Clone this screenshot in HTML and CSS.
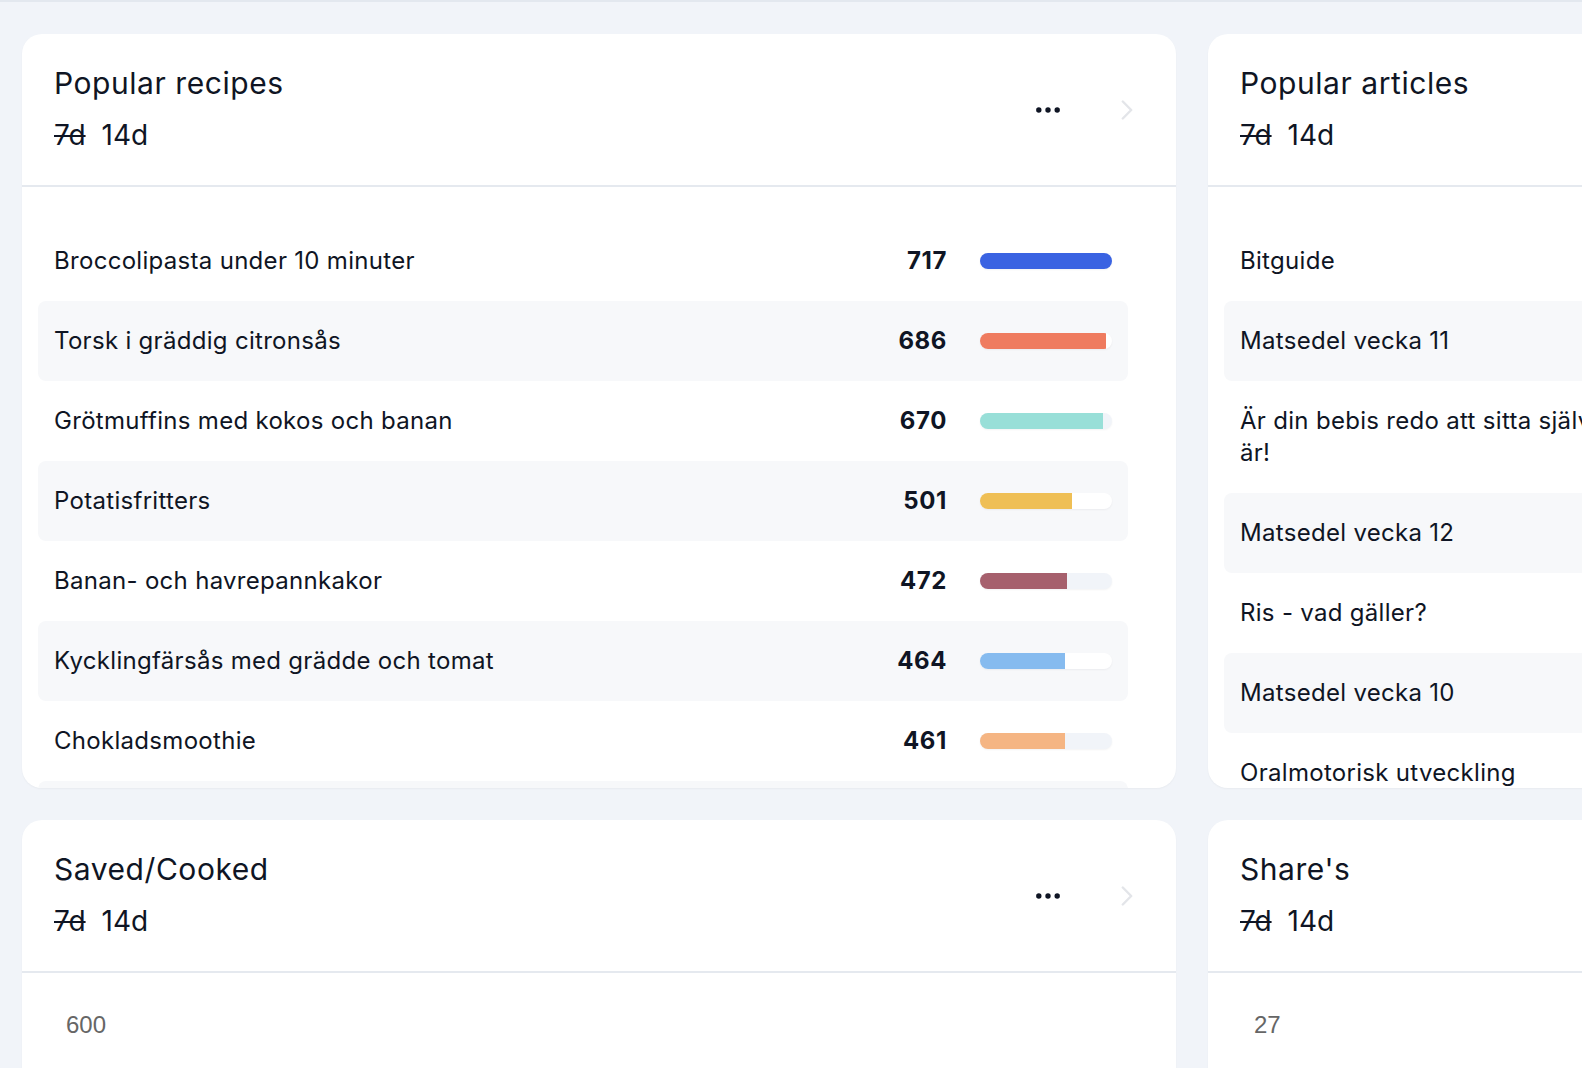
FILE: index.html
```html
<!DOCTYPE html>
<html lang="sv">
<head>
<meta charset="utf-8">
<title>Dashboard</title>
<link rel="stylesheet" href="styles.css">
</head>
<body>
<main class="board">

  <section class="card card-list">
    <header class="card-head">
      <div class="head-text">
        <h2 class="card-title">Popular recipes</h2>
        <div class="periods"><span class="period off">7d</span><span class="period">14d</span></div>
      </div>
      <div class="head-actions">
        <svg class="dots" width="24" height="6" viewBox="0 0 24 6"><circle cx="2.8" cy="3" r="2.7"/><circle cx="12" cy="3" r="2.7"/><circle cx="21.2" cy="3" r="2.7"/></svg>
        <svg class="chev" width="12" height="20" viewBox="0 0 12 20"><path d="M1.8 1.5 L10.2 10 L1.8 18.5"/></svg>
      </div>
    </header>
    <div class="list">
      <div class="row"><span class="label">Broccolipasta under 10 minuter</span><span class="num">717</span><span class="track"><span class="fill c1" style="width:100%"></span></span></div>
      <div class="row"><span class="label">Torsk i gräddig citronsås</span><span class="num">686</span><span class="track"><span class="fill c2" style="width:95.7%"></span></span></div>
      <div class="row"><span class="label">Grötmuffins med kokos och banan</span><span class="num">670</span><span class="track"><span class="fill c3" style="width:93.4%"></span></span></div>
      <div class="row"><span class="label">Potatisfritters</span><span class="num">501</span><span class="track"><span class="fill c4" style="width:69.9%"></span></span></div>
      <div class="row"><span class="label">Banan- och havrepannkakor</span><span class="num">472</span><span class="track"><span class="fill c5" style="width:65.8%"></span></span></div>
      <div class="row"><span class="label">Kycklingfärsås med grädde och tomat</span><span class="num">464</span><span class="track"><span class="fill c6" style="width:64.7%"></span></span></div>
      <div class="row"><span class="label">Chokladsmoothie</span><span class="num">461</span><span class="track"><span class="fill c7" style="width:64.3%"></span></span></div>
      <div class="row"><span class="label">Kycklinggryta med curry</span><span class="num">455</span><span class="track"><span class="fill c8" style="width:63.5%"></span></span></div>
    </div>
  </section>

  <section class="card card-list">
    <header class="card-head">
      <div class="head-text">
        <h2 class="card-title">Popular articles</h2>
        <div class="periods"><span class="period off">7d</span><span class="period">14d</span></div>
      </div>
      <div class="head-actions">
        <svg class="dots" width="24" height="6" viewBox="0 0 24 6"><circle cx="2.8" cy="3" r="2.7"/><circle cx="12" cy="3" r="2.7"/><circle cx="21.2" cy="3" r="2.7"/></svg>
        <svg class="chev" width="12" height="20" viewBox="0 0 12 20"><path d="M1.8 1.5 L10.2 10 L1.8 18.5"/></svg>
      </div>
    </header>
    <div class="list">
      <div class="row"><span class="label">Bitguide</span><span class="num">1204</span><span class="track"><span class="fill c1" style="width:100%"></span></span></div>
      <div class="row"><span class="label">Matsedel vecka 11</span><span class="num">988</span><span class="track"><span class="fill c2" style="width:82%"></span></span></div>
      <div class="row"><span class="label">Är&nbsp;din&nbsp;bebis&nbsp;redo&nbsp;att&nbsp;sitta&nbsp;själv&nbsp;i&nbsp;barnstolen?&nbsp;Så&nbsp;här&nbsp;vet&nbsp;du&nbsp;säkert&nbsp;att&nbsp;ditt&nbsp;barn&nbsp;verkligen&nbsp;redan&nbsp;nu är!</span><span class="num">941</span><span class="track"><span class="fill c3" style="width:78%"></span></span></div>
      <div class="row"><span class="label">Matsedel vecka 12</span><span class="num">876</span><span class="track"><span class="fill c4" style="width:73%"></span></span></div>
      <div class="row"><span class="label">Ris - vad gäller?</span><span class="num">702</span><span class="track"><span class="fill c5" style="width:58%"></span></span></div>
      <div class="row"><span class="label">Matsedel vecka 10</span><span class="num">655</span><span class="track"><span class="fill c6" style="width:54%"></span></span></div>
      <div class="row"><span class="label">Oralmotorisk utveckling</span><span class="num">610</span><span class="track"><span class="fill c7" style="width:51%"></span></span></div>
    </div>
  </section>

  <section class="card card-chart">
    <header class="card-head">
      <div class="head-text">
        <h2 class="card-title">Saved/Cooked</h2>
        <div class="periods"><span class="period off">7d</span><span class="period">14d</span></div>
      </div>
      <div class="head-actions">
        <svg class="dots" width="24" height="6" viewBox="0 0 24 6"><circle cx="2.8" cy="3" r="2.7"/><circle cx="12" cy="3" r="2.7"/><circle cx="21.2" cy="3" r="2.7"/></svg>
        <svg class="chev" width="12" height="20" viewBox="0 0 12 20"><path d="M1.8 1.5 L10.2 10 L1.8 18.5"/></svg>
      </div>
    </header>
    <div class="chart"><span class="axis-label">600</span></div>
  </section>

  <section class="card card-chart">
    <header class="card-head">
      <div class="head-text">
        <h2 class="card-title">Share's</h2>
        <div class="periods"><span class="period off">7d</span><span class="period">14d</span></div>
      </div>
      <div class="head-actions">
        <svg class="dots" width="24" height="6" viewBox="0 0 24 6"><circle cx="2.8" cy="3" r="2.7"/><circle cx="12" cy="3" r="2.7"/><circle cx="21.2" cy="3" r="2.7"/></svg>
        <svg class="chev" width="12" height="20" viewBox="0 0 12 20"><path d="M1.8 1.5 L10.2 10 L1.8 18.5"/></svg>
      </div>
    </header>
    <div class="chart chart-share"><span class="axis-label">27</span></div>
  </section>

</main>
</body>
</html>
```

FILE: styles.css
```css
html, body {
  margin: 0;
  padding: 0;
  overflow: hidden;
}

body {
  width: 1582px;
  height: 1068px;
  background: #f1f4f9;
  border-top: 2px solid #e3e8ef;
  box-sizing: border-box;
  font-family: "Inter", "Noto Sans", sans-serif;
  color: #0f1524;
}

.board {
  display: grid;
  grid-template-columns: 1154px 1154px;
  grid-template-rows: 754px 420px;
  column-gap: 32px;
  row-gap: 32px;
  padding: 32px 0 0 22px;
}

.card {
  background: #ffffff;
  border-radius: 20px;
  overflow: hidden;
  box-shadow: 0 1px 2px rgba(15, 21, 36, 0.04);
  display: flex;
  flex-direction: column;
  min-width: 0;
}

.card-head {
  display: flex;
  justify-content: space-between;
  align-items: center;
  height: 151px;
  padding: 0 43px 0 32px;
  border-bottom: 2px solid #e5e9ef;
  flex-shrink: 0;
}

.head-text {
  align-self: flex-start;
  padding-top: 31px;
}

.card-title {
  margin: 0;
  font-size: 30px;
  line-height: 36px;
  font-weight: 400;
  letter-spacing: 0.55px;
  color: #0f1524;
}

.periods {
  margin-top: 17px;
  font-size: 28px;
  line-height: 34px;
  display: flex;
  gap: 16px;
}

.period.off {
  text-decoration: line-through;
  text-decoration-thickness: 2px;
}

.head-actions {
  display: flex;
  align-items: center;
  gap: 61px;
}

.dots circle {
  fill: #0f1524;
}

.chev path {
  fill: none;
  stroke: #e3e5e9;
  stroke-width: 2.4;
  stroke-linecap: round;
  stroke-linejoin: round;
}

.list {
  padding: 34px 48px 0 16px;
}

.row {
  display: grid;
  grid-template-columns: minmax(0, 1fr) auto 132px;
  align-items: center;
  column-gap: 33px;
  padding: 24px 16px;
  border-radius: 8px;
  font-size: 24px;
  line-height: 32px;
}

.row:nth-child(even) {
  background: #f7f8fa;
}

.label {
  min-width: 0;
  overflow: hidden;
  letter-spacing: 0.3px;
}

.num {
  font-weight: 700;
  text-align: right;
  letter-spacing: 0.6px;
}

.track {
  display: block;
  height: 16px;
  border-radius: 8px;
  background: #f1f4f9;
  overflow: hidden;
  box-shadow: 0 1px 2px rgba(15, 21, 36, 0.05);
}

.row:nth-child(even) .track {
  background: #ffffff;
}

.fill {
  display: block;
  height: 100%;
}

.c1 { background: #3a63e2; }
.c2 { background: #ef7b5f; }
.c3 { background: #98dfd8; }
.c4 { background: #efbf55; }
.c5 { background: #a6606d; }
.c6 { background: #86bbef; }
.c7 { background: #f5b583; }
.c8 { background: #6fcf97; }

.chart {
  padding: 40px 0 0 44px;
  font-family: "Liberation Sans", Arial, sans-serif;
}

.chart-share {
  padding-left: 46px;
}

.axis-label {
  font-size: 24px;
  line-height: 24px;
  color: #666666;
}
```
